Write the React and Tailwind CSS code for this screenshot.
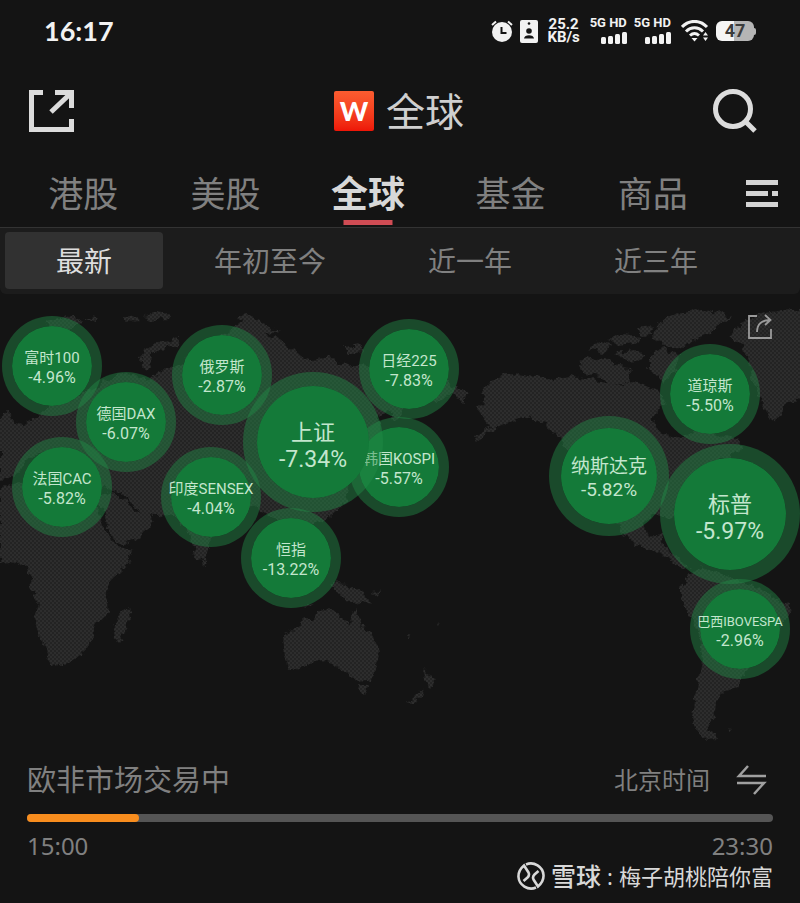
import React, { useState } from "react";

const tabs = ["港股", "美股", "全球", "基金", "商品"];
const periods = ["最新", "年初至今", "近一年", "近三年"];

// x / y are the bubble centre on the 800 x 452 map
const markets = [
  { name: "富时100", value: "-4.96%", x: 52, y: 72, size: "sm" },
  { name: "法国CAC", value: "-5.82%", x: 62, y: 193, size: "sm" },
  { name: "德国DAX", value: "-6.07%", x: 126, y: 128, size: "sm" },
  { name: "俄罗斯", value: "-2.87%", x: 222, y: 81, size: "sm" },
  { name: "日经225", value: "-7.83%", x: 409, y: 75, size: "sm" },
  { name: "韩国KOSPI", value: "-5.57%", x: 399, y: 173, size: "sm" },
  { name: "上证", value: "-7.34%", x: 313, y: 148, size: "lg" },
  { name: "印度SENSEX", value: "-4.04%", x: 211, y: 203, size: "sm" },
  { name: "恒指", value: "-13.22%", x: 291, y: 264, size: "sm" },
  { name: "道琼斯", value: "-5.50%", x: 710, y: 100, size: "sm" },
  { name: "纳斯达克", value: "-5.82%", x: 609, y: 182, size: "md" },
  { name: "标普", value: "-5.97%", x: 730, y: 220, size: "lg" },
  { name: "巴西IBOVESPA", value: "-2.96%", x: 740, y: 335, size: "sm", small: true },
];

const bubbleSize = {
  sm: "h-[100px] w-[100px] border-[10px] pt-1 text-[16px] leading-[19px]",
  md: "h-[120px] w-[120px] border-[12px] pt-1 text-[19px] leading-[23px]",
  lg: "h-[140px] w-[140px] border-[14px] pt-2 text-[23px] leading-[27px]",
};

const nameSize = {
  sm: "text-[15px]",
  md: "text-[19px]",
  lg: "text-[22px]",
};

const land = [
  // Europe and Asia
  "M0 418 L8 412 L14 424 L24 426 L40 416 L50 405 L70 400 L84 392 L100 386 L112 376 L130 372 L140 380 L152 377 L164 370 L178 366 L192 352 L210 345 L224 335 L238 324 L252 320 L264 334 L284 342 L296 354 L312 360 L330 357 L346 366 L362 364 L384 368 L404 368 L430 376 L452 384 L470 394 L462 400 L450 396 L436 404 L424 398 L410 402 L398 420 L388 412 L378 416 L384 440 L372 452 L376 470 L362 468 L350 480 L344 505 L326 520 L306 524 L298 540 L286 526 L272 518 L256 506 L240 510 L214 530 L206 556 L198 561 L186 530 L176 516 L158 515 L142 513 L130 503 L122 492 L104 490 L96 480 L66 470 L40 452 L26 462 L12 478 L0 482 Z",
  // Arabia
  "M98 500 L116 545 L124 544 L142 535 L155 522 L154 517 L146 512 L134 513 L126 500 L112 492 Z",
  // Africa
  "M0 488 L20 482 L46 480 L60 492 L88 494 L97 508 L106 530 L114 546 L134 550 L128 564 L112 580 L106 594 L108 614 L96 622 L92 640 L82 654 L70 663 L52 665 L46 652 L40 636 L35 618 L38 604 L31 586 L28 566 L14 562 L0 565 Z",
  "M128 607 L130 618 L122 640 L114 641 L113 628 L120 616 Z",
  // Novaya Zemlya and the arctic islands
  "M146 370 L139 362 L143 350 L158 343 L180 339 L182 343 L164 348 L152 355 L150 368 Z",
  "M124 318 L136 316 L138 320 L126 321 Z M144 316 L158 312 L172 314 L168 319 L150 320 Z M236 316 L250 315 L268 327 L280 331 L262 334 L250 326 Z",
  "M344 347 L362 345 L364 351 L350 353 Z M84 318 L98 319 L94 322 Z M46 324 L72 314 L82 322 L64 334 Z",
  // Sri Lanka, New Guinea, Indonesia
  "M203 558 L207 563 L204 566 L201 562 Z M330 583 L348 584 L362 591 L373 605 L360 603 L354 604 L346 600 L340 592 Z M372 592 L382 590 L376 596 Z M300 605 L316 603 L310 606 Z",
  // Australia
  "M283 637 L300 626 L304 619 L312 619 L320 609 L331 610 L339 612 L338 619 L350 625 L355 608 L361 624 L370 634 L380 650 L377 665 L370 680 L357 681 L345 672 L337 666 L325 662 L308 664 L297 669 L288 669 L285 655 Z",
  "M358 685 L368 686 L364 696 Z",
  // New Zealand
  "M423 668 L431 678 L437 680 L431 688 L427 684 Z M425 688 L420 696 L413 704 L408 702 L417 693 Z M405 634 L410 636 L407 637 Z M436 626 L440 623 L438 628 Z",
  // North America
  "M480 394 L492 380 L508 373 L530 376 L552 380 L575 376 L600 382 L618 386 L634 382 L650 388 L662 392 L666 404 L654 414 L652 424 L664 434 L684 438 L700 428 L714 434 L736 438 L744 448 L724 460 L700 468 L688 486 L676 500 L674 514 L668 518 L654 514 L644 524 L648 538 L660 534 L664 546 L674 554 L690 570 L680 568 L664 554 L646 549 L626 538 L620 528 L606 506 L584 480 L570 454 L556 434 L546 424 L530 417 L516 420 L500 426 L476 441 L474 438 L490 426 L484 418 L478 410 L486 402 Z",
  // Arctic Canada
  "M580 368 L586 356 L598 360 L606 358 L618 366 L630 368 L632 382 L612 386 L600 376 L586 374 Z M587 348 L600 342 L612 346 L604 352 Z M608 340 L622 334 L640 336 L636 344 L618 346 Z M612 352 L636 350 L644 358 L628 362 Z M650 354 L664 348 L680 356 L676 370 L664 382 L650 368 Z M636 328 L650 326 L652 334 L640 335 Z",
  "M656 326 L676 314 L704 310 L732 316 L720 324 L712 334 L694 340 L684 348 L664 346 L654 338 Z",
  // Greenland
  "M728 336 L742 324 L760 314 L784 310 L800 308 L806 308 L806 396 L786 404 L777 420 L768 414 L760 400 L752 374 L744 348 Z",
  // South America
  "M690 574 L702 566 L726 576 L750 584 L772 596 L790 606 L786 618 L776 636 L762 658 L748 668 L738 686 L722 692 L716 704 L714 718 L708 728 L718 739 L706 740 L696 731 L692 716 L695 696 L698 680 L702 660 L700 636 L690 616 L681 600 L681 588 Z M727 728 L732 729 L729 731 Z",
];

function WorldMap() {
  return (
    <svg className="block w-full" viewBox="0 294 800 452" aria-hidden="true">
      <defs>
        <filter id="coast" x="0" y="0" width="100%" height="100%">
          <feTurbulence type="fractalNoise" baseFrequency="0.12" numOctaves="3" seed="4" result="n" />
          <feDisplacementMap in="SourceGraphic" in2="n" scale="10" xChannelSelector="R" yChannelSelector="G" />
        </filter>
        <pattern id="dots" width="4" height="4" patternUnits="userSpaceOnUse">
          <rect width="2" height="2" fill="#232323" />
          <rect x="2" y="2" width="2" height="2" fill="#232323" />
        </pattern>
        <mask id="landMask" maskUnits="userSpaceOnUse" x="0" y="294" width="800" height="452">
          <g filter="url(#coast)">
            <rect x="0" y="294" width="800" height="452" fill="#000" />
            {land.map((d, i) => (
              <path key={i} d={d} fill="#fff" />
            ))}
          </g>
        </mask>
      </defs>
      <g mask="url(#landMask)">
        <rect x="0" y="294" width="800" height="452" fill="#2d2d2d" />
        <rect x="0" y="294" width="800" height="452" fill="url(#dots)" />
      </g>
    </svg>
  );
}

function Bubble({ market }) {
  return (
    <button
      className={`absolute flex -translate-x-1/2 -translate-y-1/2 flex-col items-center justify-center rounded-full border-[#228c46]/45 bg-[#147a39] bg-clip-padding whitespace-nowrap text-[#c3e6cd] ${bubbleSize[market.size]}`}
      style={{ left: `${(market.x / 800) * 100}%`, top: `${(market.y / 452) * 100}%` }}
    >
      <span className={market.small ? "text-[13px]" : nameSize[market.size]}>{market.name}</span>
      <span>{market.value}</span>
    </button>
  );
}

function Signal() {
  return (
    <div className="flex flex-col items-end gap-1">
      <span className="text-[13px] leading-[10px] font-bold">5G HD</span>
      <svg width="26" height="12" viewBox="0 0 26 12" fill="currentColor">
        <rect x="0" y="5" width="5" height="7" rx="1.5" />
        <rect x="7" y="4" width="5" height="8" rx="1.5" />
        <rect x="14" y="2" width="5" height="10" rx="1.5" />
        <rect x="21" y="0" width="5" height="12" rx="1.5" />
      </svg>
    </div>
  );
}

function StatusBar() {
  return (
    <div className="flex h-[62px] items-center justify-between pr-11 pl-11 text-[#f2f2f2]">
      <span className="font-[Lato] text-[27px] leading-8 font-bold">16:17</span>
      <div className="flex items-center gap-[7px] font-[Roboto,sans-serif]">
        {/* alarm */}
        <svg width="22" height="22" viewBox="0 0 22 22">
          <circle cx="11" cy="12" r="10" fill="currentColor" />
          <path d="M1 5 L5 1.500 M21 5 L17 1.500" stroke="currentColor" strokeWidth="2" fill="none" />
          <path d="M10.500 7 V13 H15.500" stroke="#141414" strokeWidth="2" fill="none" />
        </svg>
        {/* work profile badge */}
        <svg width="18" height="23" viewBox="0 0 18 23">
          <rect width="18" height="23" rx="2" fill="currentColor" />
          <circle cx="9" cy="3.500" r="1.300" fill="#141414" />
          <circle cx="9" cy="11" r="2.800" fill="#141414" />
          <path d="M4 18.500 C4 14 14 14 14 18.500 Z" fill="#141414" />
        </svg>
        <p className="ml-[2px] w-[34px] text-center text-[15px] leading-[13px] font-bold">25.2 KB/s</p>
        <div className="flex gap-[7px] pl-[2px]">
          <Signal />
          <Signal />
        </div>
        {/* wifi */}
        <svg className="ml-[3px]" width="28" height="22" viewBox="0 0 28 22" fill="none">
          <path d="M1 7 C8 -0.500 19 -0.500 26 7" stroke="currentColor" strokeWidth="3" />
          <path d="M5 11.500 C10 6.500 17 6.500 22 11.500" stroke="currentColor" strokeWidth="3" />
          <path d="M9 15.500 C12 12.800 15 12.800 18 15.500" stroke="currentColor" strokeWidth="3" />
          <path d="M10.500 18 H16.500 L13.500 21.500 Z" fill="currentColor" />
          <path d="M22 15.500 L24.500 12 L27 15.500 Z M22 17.500 L24.500 21 L27 17.500 Z" fill="currentColor" />
        </svg>
        <div className="flex items-center">
          <span className="flex h-5 w-[38px] items-center justify-center rounded-[6px] bg-linear-to-r from-[#f5f5f5] from-48% to-[#b5b5b5] to-48% text-[18px] leading-5 font-bold text-[#3c3c3c]">
            47
          </span>
          <span className="h-[7px] w-[2px] rounded-r-sm bg-[#b5b5b5]" />
        </div>
      </div>
    </div>
  );
}

function Header() {
  return (
    <header className="grid h-[98px] grid-cols-[1fr_auto_1fr] items-center pr-[42px] pl-[28px]">
      <button aria-label="分享" className="justify-self-start">
        <svg width="46" height="44" viewBox="0 0 46 44" fill="none" stroke="#dcdcdc" strokeWidth="5">
          <path d="M15 3.500 H3.500 V40.500 H43.500 V30" />
          <path d="M27 3.500 H43.500 V19 M42 5 L23 23" />
        </svg>
      </button>
      <div className="flex items-center gap-3 pl-3">
        <span className="flex h-10 w-10 items-center justify-center rounded-xs bg-linear-to-b from-[#fb5c30] to-[#ee1507] pb-px font-[Lato] text-[27px] leading-8 font-black text-white">
          W
        </span>
        <h1 className="text-[39px] leading-[48px] text-[#cfcfcf]">全球</h1>
      </div>
      <button aria-label="搜索" className="justify-self-end">
        <svg width="46" height="46" viewBox="0 0 46 46" fill="none" stroke="#dcdcdc" strokeWidth="5">
          <circle cx="21" cy="21" r="17.500" />
          <path d="M33 33 L43 43" />
        </svg>
      </button>
    </header>
  );
}

export default function App() {
  const [tab, setTab] = useState("全球");
  const [period, setPeriod] = useState("最新");

  return (
    <div className="min-h-screen bg-[#141414] font-['Noto_Sans','Noto_Sans_CJK_SC',sans-serif]">
      <StatusBar />
      <Header />

      {/* Market tabs */}
      <nav className="flex h-[68px] items-stretch border-b border-[#333333] pr-[22px] pl-3">
        <div className="flex flex-1">
          {tabs.map((t) => (
            <button
              key={t}
              onClick={() => setTab(t)}
              className={`relative flex-1 leading-[44px] ${
                t === tab ? "text-[37px] font-bold text-[#d8d8d8]" : "text-[35px] text-[#808080]"
              }`}
            >
              {t}
              {t === tab && (
                <span className="absolute bottom-[2px] left-1/2 h-[5px] w-[49px] -translate-x-1/2 bg-[#d04c54]" />
              )}
            </button>
          ))}
        </div>
        <button aria-label="更多" className="ml-[22px]">
          <svg width="32" height="28" viewBox="0 0 32 28" fill="#d4d4d4">
            <rect width="32" height="5" />
            <rect y="11" width="22" height="5" />
            <rect x="26" y="11" width="6" height="5" />
            <rect y="22" width="32" height="5" />
          </svg>
        </button>
      </nav>

      {/* Period switch */}
      <div className="flex h-[66px] rounded-b-md bg-[#1c1c1c] px-[5px] pt-1 pb-[5px]">
        {periods.map((p) => (
          <button
            key={p}
            onClick={() => setPeriod(p)}
            className={`rounded-[4px] px-[51px] text-[28px] leading-9 whitespace-nowrap ${
              p === period ? "bg-[#313131] text-[#dedede]" : "text-[#808080]"
            }`}
          >
            {p}
          </button>
        ))}
      </div>

      {/* Map */}
      <main className="relative overflow-hidden font-[Roboto,'Noto_Sans_CJK_SC',sans-serif]">
        <WorldMap />
        {markets.map((m) => (
          <Bubble key={m.name} market={m} />
        ))}
        <button aria-label="分享地图" className="absolute top-5 right-7">
          <svg width="24" height="26" viewBox="0 0 24 26" fill="none" stroke="#9a9a9a" strokeWidth="1.800">
            <path d="M9 2 H1 V24 H23 V15" />
            <path d="M9 18 C9 10 14 6 22 6 M17 1 L22.500 6 L17 11" />
          </svg>
        </button>
      </main>

      {/* Trading session */}
      <footer className="px-[27px] pb-3 text-[#808080]">
        <div className="flex h-[68px] items-center justify-between">
          <span className="text-[29px] leading-9">欧非市场交易中</span>
          <button className="flex items-center gap-[26px] pr-[6px] text-2xl leading-9">
            北京时间
            <svg width="31" height="30" viewBox="0 0 31 30" fill="none" stroke="#a0a0a0" strokeWidth="2.500">
              <path d="M30 11 H3 L12 1" />
              <path d="M1 18 H28 L18 29" />
            </svg>
          </button>
        </div>
        <div className="h-2 rounded-full bg-[#555555]">
          <div className="h-2 w-[15%] rounded-full bg-[#f88d1e]" />
        </div>
        <div className="mt-2 flex justify-between text-2xl leading-8">
          <span>15:00</span>
          <span>23:30</span>
        </div>
        <div className="flex h-7 items-center justify-end text-[22px] leading-7 text-[#d8d8d8]">
          <svg className="mr-[6px]" width="28" height="28" viewBox="0 0 28 28" fill="none" stroke="currentColor" strokeWidth="2.600">
            <path d="M9 2.500 C17 -1 26 5 26.500 13 C26.800 18 24 22 21 24.500 L16.500 17.500 C15.500 15.500 16 14 17.500 12.500 L21.500 9" />
            <path d="M19 25.500 C11 29 2 23 1.500 15 C1.200 10 4 6 7 3.500 L11.500 10.500 C12.500 12.500 12 14 10.500 15.500 L6.500 19" />
          </svg>
          <span className="text-[25px] font-medium">雪球</span>
          <span className="w-[18px] text-center">:</span>
          <span>梅子胡桃陪你富</span>
        </div>
      </footer>
    </div>
  );
}
